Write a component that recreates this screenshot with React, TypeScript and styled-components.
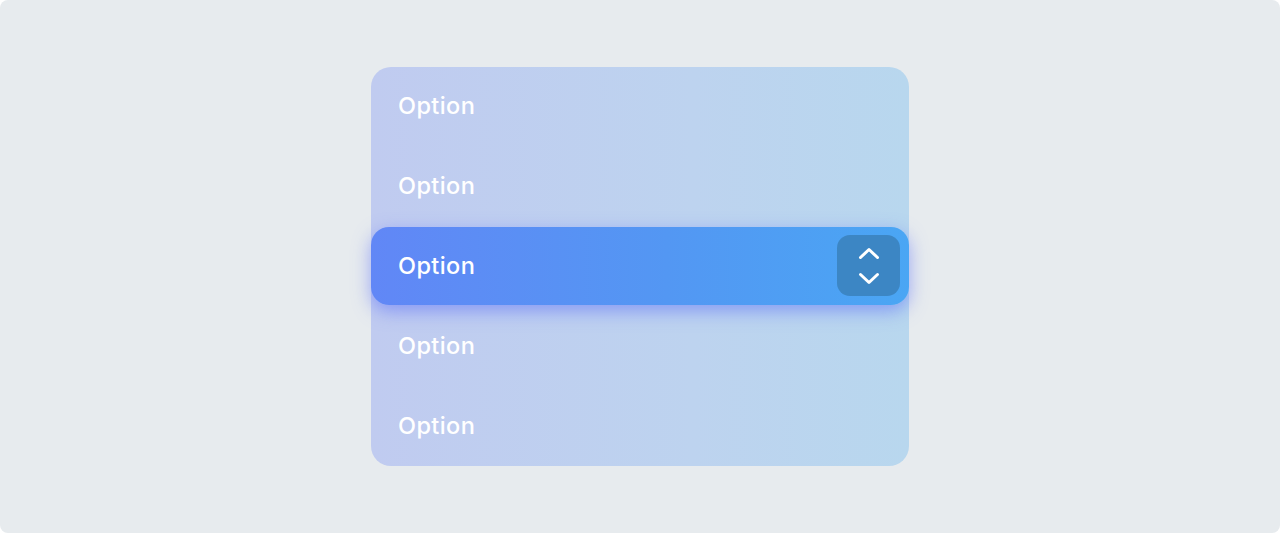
import styled, { createGlobalStyle } from "styled-components";

const GlobalStyle = createGlobalStyle`
  html, body {
    margin: 0;
    padding: 0;
    background: #ffffff;
  }
  body {
    font-family: Inter, "Noto Sans", sans-serif;
  }
`;

const Frame = styled.div`
  width: 1280px;
  height: 533px;
  box-sizing: border-box;
  background: #e7ebee;
  border-radius: 8px;
  display: flex;
  justify-content: center;
  padding-top: 67px;
`;

const Panel = styled.div`
  width: 538px;
  height: 399px;
  border-radius: 20px;
  background: linear-gradient(90deg, #c0cbf0 0%, #bdd3ef 60%, #b8d7ee 100%);
  display: flex;
  flex-direction: column;
`;

const Row = styled.div<{ $selected?: boolean }>`
  height: 80px;
  flex: none;
  display: flex;
  align-items: center;
  justify-content: space-between;
  box-sizing: border-box;
  padding: 0 9px 3px 27px;
  color: #ffffff;
  font-size: 23.5px;
  font-weight: 450;
  letter-spacing: 0.4px;
  ${(p) =>
    p.$selected &&
    `
    height: 78px;
    margin: 0 0 2px;
    padding-bottom: 1px;
    border-radius: 18px;
    background: linear-gradient(90deg, #6187f6 0%, #5397f3 55%, #4aa6f4 100%);
    box-shadow: 0 6px 18px rgba(90, 110, 250, 0.55);
  `}
`;

const Stepper = styled.button`
  width: 63px;
  height: 61px;
  border: none;
  border-radius: 13px;
  background: #3c86c4;
  display: flex;
  flex-direction: column;
  align-items: center;
  justify-content: center;
  gap: 12px;
  padding: 0;
  cursor: pointer;
`;

const options = ["Option", "Option", "Option", "Option", "Option"];

export default function App() {
  return (
    <>
      <GlobalStyle />
      <Frame>
        <Panel>
          {options.map((label, i) => (
            <Row key={i} $selected={i === 2}>
              <span>{label}</span>
              {i === 2 && (
                <Stepper type="button" aria-label="Change option">
                  <svg width="22" height="13" viewBox="0 0 22 13" fill="none">
                    <path d="M2.5 10.5L11 2.5L19.5 10.5" stroke="#fff" strokeWidth="3" strokeLinecap="round" strokeLinejoin="round" />
                  </svg>
                  <svg width="22" height="13" viewBox="0 0 22 13" fill="none">
                    <path d="M2.5 2.5L11 10.5L19.5 2.5" stroke="#fff" strokeWidth="3" strokeLinecap="round" strokeLinejoin="round" />
                  </svg>
                </Stepper>
              )}
            </Row>
          ))}
        </Panel>
      </Frame>
    </>
  );
}
